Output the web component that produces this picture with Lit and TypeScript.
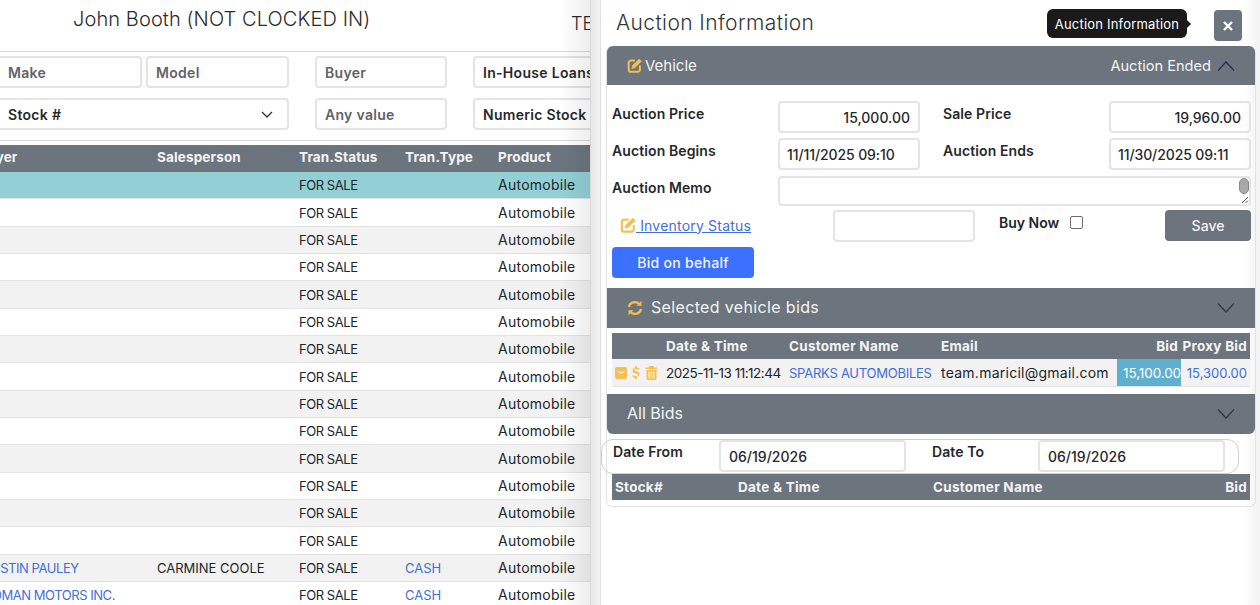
import { LitElement, html, css, svg } from 'lit';
import { customElement } from 'lit/decorators.js';

const editIcon = svg`<path d="M9.500 3H4.500a2.500 2.500 0 0 0-2.500 2.500v8.500a2.500 2.500 0 0 0 2.500 2.500h8.500a2.500 2.500 0 0 0 2.500-2.500V9" fill="none" stroke="#f4bf4f" stroke-width="2.400"/><path d="M14.600.8l3 3-8.300 8.400-3.900.8.800-3.900z" fill="#f4bf4f"/>`;

const rows = [
  { buyer: '', sales: '', type: '', cls: 'sel' },
  ...Array.from({ length: 13 }, () => ({ buyer: '', sales: '', type: '', cls: '' })),
  { buyer: 'JUSTIN PAULEY', sales: 'CARMINE COOLE', type: 'CASH', cls: '' },
  { buyer: 'ROMAN MOTORS INC.', sales: '', type: 'CASH', cls: '' },
];

@customElement('app-root')
export class AppRoot extends LitElement {
  static styles = css`
    :host {
      display: flex;
      width: 1260px;
      height: 605px;
      overflow: hidden;
      background: #fff;
      color: #212529;
      font-family: Inter, 'Noto Sans', sans-serif;
      font-size: 13px;
    }
    * { box-sizing: border-box; }

    /* page behind the drawer */
    .page {
      width: 590px;
      flex: none;
      overflow: hidden;
      position: relative;
    }
    .page::after {
      content: '';
      position: absolute;
      top: 0;
      right: 0;
      bottom: 0;
      width: 30px;
      background: linear-gradient(to right, rgba(0, 0, 0, 0), rgba(0, 0, 0, 0.07));
    }
    .page-in { width: 680px; margin-left: -30px; }
    .top {
      height: 52px;
      display: flex;
      border-bottom: 1px solid #d8d8d8;
      font-size: 20px;
      font-weight: 300;
      letter-spacing: 0.1px;
      color: #2b2b2b;
    }
    .who { margin-left: 73px; padding-top: 7px; width: 498px; flex: none; }
    .te { padding-top: 13px; font-size: 18px; }
    .filters {
      padding-top: 4px;
      height: 89px;
      border-bottom: 1px solid #d8d8d8;
      display: grid;
      grid-template-columns: 172px 143px 154px 200px;
      grid-auto-rows: 32px;
      row-gap: 10px;
      column-gap: 4px;
    }
    .f {
      border: 2px solid #e3e4e6;
      border-radius: 4px;
      display: flex;
      align-items: center;
      padding: 0 8px;
      font-weight: 600;
      font-size: 14px;
      letter-spacing: 0.3px;
      color: #5f6368;
      white-space: nowrap;
      overflow: hidden;
    }
    .f.val { color: #26292c; }
    .buyer-col { margin-left: 22px; }
    .last-col { margin-left: 22px; }
    .span2 { grid-column: span 2; justify-content: space-between; padding: 0 14px 0 36px; }
    .f.make { padding-left: 36px; }
    .table { margin-top: 4px; }
    .tr {
      display: grid;
      grid-template-columns: 187px 142px 106px 93px 1fr;
      height: 27.35px;
      align-items: center;
      border-bottom: 1px solid #e2e3e5;
      font-size: 13px;
      white-space: nowrap;
    }
    .tr > div { overflow: hidden; }
    .tr .b { padding-left: 14px; letter-spacing: -0.45px; }
    .tr.head {
      background: #6c757d;
      color: #f4f4f4;
      font-weight: 700;
      font-size: 13.5px;
      letter-spacing: 0.15px;
      height: 27px;
      padding-bottom: 3px;
      border-bottom: none;
    }
    .tr.head .b { padding-left: 8px; letter-spacing: 0.15px; }
    .tr.odd { background: #f2f2f2; }
    .tr.sel { background: #93d0d6; }
    .sale { letter-spacing: -0.45px; }
    .prod { font-size: 14px; letter-spacing: 0.25px; padding-bottom: 1px; }
    .link { color: #3f6fd8; }

    /* drawer */
    .drawer {
      width: 670px;
      flex: none;
      position: relative;
      border-left: 1px solid #d8d8d8;
      padding: 0 4px 0 15px;
      background:
        linear-gradient(to right, rgba(0, 0, 0, 0) 652px, rgba(0, 0, 0, 0.05) 669px),
        linear-gradient(to right, #e8e8e8 0, #f3f3f3 9px, #dedede 9px, #dedede 10px, #fff 10px);
    }
    .d-head {
      height: 46px;
      display: flex;
      align-items: center;
      justify-content: space-between;
      padding-left: 10px;
      font-size: 21px;
      font-weight: 300;
      letter-spacing: 0.4px;
      color: #33373a;
    }
    .d-head span { position: relative; top: -1px; }
    .tip {
      position: absolute;
      left: 456px;
      top: 9px;
      height: 29px;
      width: 140px;
      border-radius: 6px;
      background: #1a1a1a;
      color: #fff;
      font-size: 13px;
      letter-spacing: 0.2px;
      display: flex;
      align-items: center;
      justify-content: center;
    }
    .tip::after {
      content: '';
      position: absolute;
      right: -4px;
      top: 11px;
      border-left: 4px solid #1a1a1a;
      border-top: 4px solid transparent;
      border-bottom: 4px solid transparent;
    }
    .close {
      width: 28px;
      height: 31px;
      margin: 5px 14px 0 0;
      background: #6c757d;
      border-radius: 4px;
      color: #fff;
      display: flex;
      align-items: center;
      justify-content: center;
    }
    .box {
      border: 1px solid #e2e3e5;
      border-top: none;
      border-radius: 6px;
      height: 461px;
      width: 650px;
      position: relative;
    }
    .bar {
      background: #6c757d;
      color: #f4f4f4;
      display: flex;
      align-items: center;
      justify-content: space-between;
      font-size: 15px;
      padding: 0 20px;
    }
    .bar.a { height: 39px; border-radius: 6px 6px 0 0; }
    .bar.b { height: 40px; }
    .bar.c { height: 40px; border-radius: 0 0 6px 6px; }
    .bar .l { display: flex; align-items: center; gap: 3px; }
    .bar .r { display: flex; align-items: center; gap: 6px; font-size: 14.6px; }
    .sel-title { font-size: 16px; letter-spacing: 0.35px; position: relative; top: -1px; }
    .all-title { font-size: 16px; position: relative; top: -1px; }
    .form {
      height: 203px;
      padding: 16px 5px 0;
      display: grid;
      grid-template-columns: 166px 142px 23px 166px 142px;
      grid-auto-rows: min-content;
      row-gap: 5px;
    }
    .lbl { font-weight: 600; font-size: 14px; letter-spacing: 0.1px; color: #26292c; }
    .in {
      height: 32px;
      border: 2px solid #e3e4e6;
      border-radius: 4px;
      display: flex;
      align-items: center;
      padding: 0 7px;
      font-size: 14px;
      font-weight: 500;
      color: #26292c;
    }
    .in.num { justify-content: flex-end; padding-right: 8px; }
    .in.dt { letter-spacing: -0.1px; }
    .pad { padding-top: 4px; }
    .memo-lbl { padding-top: 4px; }
    .memo {
      grid-column: 2 / 6;
      height: 30px;
      margin-top: 1px;
      border: 2px solid #e3e4e6;
      border-radius: 4px;
      position: relative;
    }
    .thumb {
      position: absolute;
      right: 0;
      top: 0;
      width: 10px;
      height: 16px;
      border-radius: 5px;
      background: #a9a9a9;
      border: 1px solid #8a8a8a;
    }
    .grip {
      position: absolute;
      right: 0;
      bottom: 0;
      width: 10px;
      height: 10px;
      background: #fff;
    }
    .status {
      grid-column: 1 / 6;
      display: grid;
      grid-template-columns: 221px 142px 24px 142px 1fr;
      height: 32px;
      margin-top: -1px;
    }
    .inv { display: flex; align-items: center; padding: 0 0 2px 8px; font-size: 14px; letter-spacing: 0.2px; }
    .inv a { color: #3f6fd8; text-decoration: underline; }
    .buy { display: flex; align-items: flex-start; gap: 11px; padding-top: 4px; font-weight: 600; font-size: 14px; }
    .check {
      width: 13px;
      height: 13px;
      margin-top: 2px;
      border: 1px solid #6d6d6d;
      border-radius: 2px;
      background: #fff;
    }
    .btn {
      border-radius: 4px;
      color: #f4f4f4;
      font-size: 14px;
      font-weight: 500;
      display: flex;
      align-items: center;
      justify-content: center;
      height: 31px;
    }
    .save { background: #6c757d; width: 86px; justify-self: end; }
    .bid {
      background: #3b71fe;
      width: 142px;
      grid-column: 1 / 3;
      letter-spacing: 0.3px;
    }
    .grid {
      margin: 5px 5px 0;
      font-size: 13px;
      white-space: nowrap;
    }
    .g1 {
      display: grid;
      grid-template-columns: 54px 123px 152px 1fr 64px 69px;
      align-items: center;
    }
    .g1.h {
      height: 26px;
      padding-bottom: 1px;
      background: #6c757d;
      color: #f4f4f4;
      font-weight: 700;
      font-size: 13.5px;
      letter-spacing: 0.25px;
    }
    .g1.d {
      height: 28px;
      background: #f2f2f2;
      border-bottom: 1px solid #e2e3e5;
      font-size: 13.5px;
    }
    .when { letter-spacing: -0.5px; }
    .mail { font-size: 14px; letter-spacing: 0.25px; }
    .right { text-align: right; padding-right: 3px; }
    .acts { display: flex; align-items: center; gap: 5px; padding-left: 3px; }
    .acts svg { fill: #f4bf4f; display: block; }
    .paid {
      background: #5fb0cf;
      color: #fff;
      height: 27px;
      display: flex;
      align-items: center;
      justify-content: flex-end;
      letter-spacing: -0.1px;
    }
    .link13 { color: #3f6fd8; font-size: 13px; letter-spacing: -0.25px; }
    .proxy { letter-spacing: 0; }
    .spacer { height: 7px; }
    .dates {
      margin: 5px 0 0 -6px;
      width: 638px;
      height: 35px;
      border: 1px solid #cfcfcf;
      border-radius: 12px;
      display: grid;
      grid-template-columns: 106px 187px 26px 106px 187px;
      padding-left: 11px;
      align-items: start;
    }
    .dates .lbl { padding-top: 3px; }
    .dates .in { padding-left: 8px; }
    .g2 {
      margin: 0 5px;
      height: 26px;
      padding-bottom: 1px;
      background: #6c757d;
      color: #f4f4f4;
      font-weight: 700;
      font-size: 13.5px;
      letter-spacing: 0.25px;
      display: grid;
      grid-template-columns: 123px 195px 1fr 40px;
      align-items: center;
      padding-left: 3px;
    }
  `;

  chevron(up: boolean, color = '#2f3640') {
    return html`<svg width="18" height="10" viewBox="0 0 18 10" fill="none" stroke=${color} stroke-width="1.2">
      <path d=${up ? 'M1 9.5L9 1l8 8.5' : 'M1 .5L9 9l8-8.5'} /></svg>`;
  }

  render() {
    return html`
      <div class="page">
        <div class="top"><div class="who">John Booth (NOT CLOCKED IN)</div><div class="te">TE</div></div>
        <div class="page-in">
          <div class="filters">
            <div class="f make">Make</div>
            <div class="f">Model</div>
            <div class="f buyer-col">Buyer</div>
            <div class="f val last-col">In-House Loans</div>
            <div class="f val span2">Stock #
              <svg width="12" height="7" viewBox="0 0 12 7" fill="none" stroke="#333" stroke-width="1.3"><path d="M1 1l5 5 5-5"/></svg>
            </div>
            <div class="f buyer-col">Any value</div>
            <div class="f val last-col">Numeric Stock Number</div>
          </div>
          <div class="table">
            <div class="tr head">
              <div class="b">Buyer</div><div>Salesperson</div><div>Tran.Status</div><div>Tran.Type</div><div>Product</div>
            </div>
            ${rows.map((r, i) => html`
              <div class="tr ${r.cls} ${i % 2 === 0 && !r.cls ? 'odd' : ''}">
                <div class="b link">${r.buyer}</div>
                <div>${r.sales}</div>
                <div class="sale">FOR SALE</div>
                <div class="link">${r.type}</div>
                <div class="prod">Automobile</div>
              </div>`)}
          </div>
        </div>
      </div>

      <div class="drawer">
        <div class="d-head">
          <span>Auction Information</span>
          <div class="close">
            <svg width="10" height="10" viewBox="0 0 10 10" stroke="#fff" stroke-width="2.4"><path d="M1 1l8 8M9 1L1 9"/></svg>
          </div>
        </div>
        <div class="tip">Auction Information</div>
        <div class="box">
          <div class="bar a">
            <div class="l"><svg width="15" height="15" viewBox="0 0 18 18">${editIcon}</svg>Vehicle</div>
            <div class="r">Auction Ended ${this.chevron(true, '#1f2f5c')}</div>
          </div>
          <div class="form">
            <div class="lbl pad">Auction Price</div><div class="in num">15,000.00</div><div></div>
            <div class="lbl pad">Sale Price</div><div class="in num">19,960.00</div>
            <div class="lbl pad">Auction Begins</div><div class="in dt">11/11/2025 09:10</div><div></div>
            <div class="lbl pad">Auction Ends</div><div class="in dt">11/30/2025 09:11</div>
            <div class="lbl memo-lbl">Auction Memo</div>
            <div class="memo">
              <div class="thumb"></div>
              <div class="grip">
                <svg width="10" height="10" viewBox="0 0 10 10" stroke="#555" stroke-width="1" style="display:block"><path d="M3 9l6-6M6.500 9L9 6.500"/></svg>
              </div>
            </div>
            <div class="status">
              <div class="inv"><svg width="16" height="16" viewBox="0 0 18 18">${editIcon}</svg><a>&nbsp;Inventory Status</a></div>
              <div class="in"></div>
              <div></div>
              <div class="buy">Buy Now <span class="check"></span></div>
              <div class="btn save">Save</div>
            </div>
            <div class="btn bid">Bid on behalf</div>
          </div>
          <div class="bar b">
            <div class="l" style="gap:8px">
              <svg width="16" height="16" viewBox="0 0 16 16" fill="none" stroke="#f4bf4f" stroke-width="2.200">
                <path d="M2 7a6 5.600 0 0 1 10.400-3"/><path d="M14 9a6 5.600 0 0 1-10.400 3"/>
                <path d="M14.500 .8v5h-5z" fill="#f4bf4f" stroke="none"/><path d="M1.500 15.200v-5h5z" fill="#f4bf4f" stroke="none"/>
              </svg>
              <span class="sel-title">Selected vehicle bids</span>
            </div>
            ${this.chevron(false)}
          </div>
          <div class="grid">
            <div class="g1 h">
              <div></div><div>Date &amp; Time</div><div>Customer Name</div><div>Email</div>
              <div class="right">Bid</div><div class="right">Proxy Bid</div>
            </div>
            <div class="g1 d">
              <div class="acts">
                <svg width="12" height="12" viewBox="0 0 12 12"><path fill-rule="evenodd" d="M2 0h8a2 2 0 0 1 2 2v8a2 2 0 0 1-2 2H2a2 2 0 0 1-2-2V2a2 2 0 0 1 2-2zm.5 3.200L6 5.600l3.500-2.400v1.400L6 7 2.500 4.600z"/></svg>
                <svg width="8" height="13" viewBox="0 0 8 13"><path d="M3.200 0h1.600v1.400c1.200.1 2.200.6 2.800 1.300L6.500 4C5.900 3.400 5 3 4 3c-1 0-1.700.4-1.700 1 0 .7.8.9 2 1.200 1.700.4 3.400 1 3.400 2.900 0 1.500-1.200 2.400-2.900 2.600V13H3.200v-1.300C1.900 11.500.8 11 .1 10.100l1.200-1.200c.7.700 1.700 1.200 2.700 1.200 1.200 0 2-.5 2-1.200 0-.8-.9-1-2.100-1.300C2.300 7.200.6 6.700.6 4.800c0-1.700 1.200-2.900 2.600-3.300z"/></svg>
                <svg width="13" height="14" viewBox="0 0 12 14"><path fill-rule="evenodd" d="M4 0h4l.7 1.400H12V3H0V1.400h3.300zM1 4h10v8.500c0 .8-.7 1.500-1.500 1.500h-7C1.700 14 1 13.300 1 12.500zm2 1.500v7h1.200v-7zm2.400 0v7h1.200v-7zm2.400 0v7H9v-7z"/></svg>
              </div>
              <div class="when">2025-11-13 11:12:44</div>
              <div class="link13">SPARKS AUTOMOBILES</div>
              <div class="mail">team.maricil@gmail.com</div>
              <div class="paid">15,100.00</div>
              <div class="right link13 proxy">15,300.00</div>
            </div>
          </div>
          <div class="spacer"></div>
          <div class="bar c"><span class="all-title">All Bids</span>${this.chevron(false)}</div>
          <div class="dates">
            <div class="lbl">Date From</div><div class="in">06/19/2026</div><div></div>
            <div class="lbl">Date To</div><div class="in">06/19/2026</div>
          </div>
          <div class="g2"><div>Stock#</div><div>Date &amp; Time</div><div>Customer Name</div><div class="right">Bid</div></div>
        </div>
      </div>
    `;
  }
}
